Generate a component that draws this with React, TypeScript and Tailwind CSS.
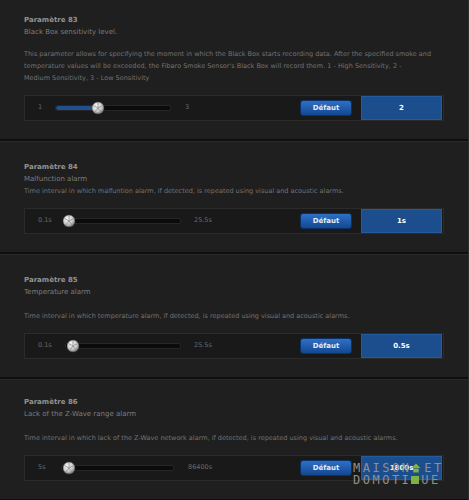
const font = { fontFamily: '"DejaVu Sans", Verdana, sans-serif' };

type Param = {
  num: number;
  name: string;
  desc: string;
  gapBeforeDesc: string;
  pt: string;
  pb: string;
  min: string;
  max: string;
  trackLeft: string;
  trackWidth: string;
  maxLeft: string;
  pct: number;
  value: string;
};

const params: Param[] = [
  {
    num: 83,
    name: 'Black Box sensitivity level.',
    desc: "This parameter allows for specifying the moment in which the Black Box starts recording data. After the specified smoke and temperature values will be exceeded, the Fibaro Smoke Sensor's Black Box will record them. 1 - High Sensitivity, 2 -\nMedium Sensitivity, 3 - Low Sensitivity",
    gapBeforeDesc: 'mt-[10px]',
    pt: 'pt-[14px]',
    pb: 'pb-[18px]',
    min: '1',
    max: '3',
    trackLeft: 'w-[30px]',
    trackWidth: 'w-[116px]',
    maxLeft: 'ml-[14px]',
    pct: 37,
    value: '2',
  },
  {
    num: 84,
    name: 'Malfunction alarm',
    desc: 'Time interval in which malfuntion alarm, if detected, is repeated using visual and acoustic alarms.',
    gapBeforeDesc: 'mt-0',
    pt: 'pt-[20px]',
    pb: 'pb-[18px]',
    min: '0.1s',
    max: '25.5s',
    trackLeft: 'w-[40px]',
    trackWidth: 'w-[116px]',
    maxLeft: 'ml-[13px]',
    pct: 3,
    value: '1s',
  },
  {
    num: 85,
    name: 'Temperature alarm',
    desc: 'Time interval in which temperature alarm, if detected, is repeated using visual and acoustic alarms.',
    gapBeforeDesc: 'mt-[12px]',
    pt: 'pt-[20px]',
    pb: 'pb-[18px]',
    min: '0.1s',
    max: '25.5s',
    trackLeft: 'w-[40px]',
    trackWidth: 'w-[116px]',
    maxLeft: 'ml-[13px]',
    pct: 0,
    value: '0.5s',
  },
  {
    num: 86,
    name: 'Lack of the Z-Wave range alarm',
    desc: 'Time interval in which lack of the Z-Wave network alarm, if detected, is repeated using visual and acoustic alarms.',
    gapBeforeDesc: 'mt-[12px]',
    pt: 'pt-[17px]',
    pb: 'pb-[18px]',
    min: '5s',
    max: '86400s',
    trackLeft: 'w-[36px]',
    trackWidth: 'w-[113px]',
    maxLeft: 'ml-[14px]',
    pct: 0,
    value: '1800s',
  },
];

const Thumb = () => (
  <svg width="13" height="13" viewBox="0 0 13 13" className="absolute top-1/2 -translate-y-1/2 -translate-x-1/2">
    <defs>
      <radialGradient id="knob" cx="40%" cy="35%" r="70%">
        <stop offset="0%" stopColor="#ffffff" />
        <stop offset="60%" stopColor="#c9c9c9" />
        <stop offset="100%" stopColor="#6e6e6e" />
      </radialGradient>
    </defs>
    <circle cx="6.5" cy="6.5" r="6" fill="url(#knob)" />
    <path d="M6.5 6.5 L6.5 1 M6.5 6.5 L11 4 M6.5 6.5 L10 11 M6.5 6.5 L3 11 M6.5 6.5 L2 4" stroke="#8a8a8a" strokeWidth="0.8" />
    <circle cx="6.5" cy="6.5" r="6" fill="none" stroke="#5a5a5a" strokeWidth="0.6" />
  </svg>
);

const Slider = ({ p }: { p: Param }) => (
  <div className={`relative h-[6px] ${p.trackWidth} rounded-[2px] bg-[#0b0b0b] border border-[#262626]`}>
    <div className="h-full rounded-[2px] bg-[#21508f]" style={{ width: `${p.pct}%` }} />
    <div className="absolute inset-y-0" style={{ left: `${p.pct === 0 ? 6 : p.pct}%` }}>
      <Thumb />
    </div>
  </div>
);

const Section = ({ p }: { p: Param }) => (
  <div className={`px-[24px] ${p.pt} ${p.pb} border-b-2 border-[#0f0f0f] shadow-[0_1px_0_#2a2a2a]`}>
    <div className="text-[7px] leading-[12px] font-bold text-[#939393]">Paramètre {p.num}</div>
    <div className="text-[7px] leading-[12px] text-[#7d7d7d]">{p.name}</div>
    <div className={`${p.gapBeforeDesc} text-[6.5px] leading-[12px] text-[#737373] whitespace-pre-line`}>{p.desc}</div>
    <div className="mt-[11px] h-[26px] flex items-center bg-[#191919] border border-[#2b2b2b]">
      <div className={`${p.trackLeft} pl-[13px] text-[6.5px] text-[#6a6a6a]`}>{p.min}</div>
      <Slider p={p} />
      <div className={`${p.maxLeft} text-[6.5px] text-[#6a6a6a]`}>{p.max}</div>
      <button className="ml-auto h-[16px] w-[52px] rounded-[3px] bg-gradient-to-b from-[#2d70c6] to-[#134892] border border-[#0d3166] text-[7px] font-bold text-[#e6ecf5] leading-none">
        Défaut
      </button>
      <div className="ml-[9px] mr-[1px] h-[24px] w-[81px] flex items-center justify-center bg-[#1c4d8d] border border-[#245aa0] text-[7px] font-bold text-white">
        {p.value}
      </div>
    </div>
  </div>
);

export default function App() {
  return (
    <div className="relative w-[469px] h-[500px] overflow-hidden bg-[#1f1f1f] border-r border-[#2c2c2c]" style={font}>
      {params.map((p) => (
        <Section key={p.num} p={p} />
      ))}
      {/* watermark */}
      <div className="absolute left-[353px] top-[462px] flex flex-col leading-[12px] text-[#8f8f8f]" style={{ fontFamily: '"DejaVu Sans Mono", monospace' }}>
        <div className="flex items-center text-[12px] tracking-[2.5px]">
          <span>MAISON</span>
          <svg width="10" height="10" viewBox="0 0 9 9" className="mr-[3px]">
            <path d="M0.5 4.5 L4.5 0.5 L8.5 4.5 Z" fill="#7fb241" />
            <rect x="2" y="5" width="5" height="3.5" fill="#7fb241" />
          </svg>
          <span>ET</span>
        </div>
        <div className="flex items-center text-[12px] tracking-[2.5px]">
          <span>DOMOTI</span>
          <span className="inline-block w-[8px] h-[8px] bg-[#7fb241] mr-[2px]" />
          <span>UE</span>
        </div>
      </div>
    </div>
  );
}
